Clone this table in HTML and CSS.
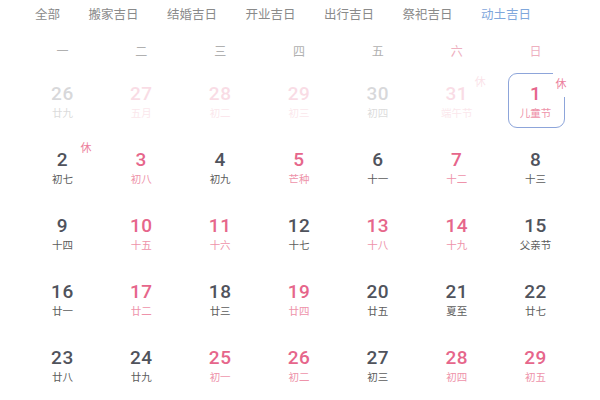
FILE: index.html
```html
<!DOCTYPE html>
<html lang="zh">
<head>
<meta charset="utf-8">
<link rel="stylesheet" href="styles.css">
</head>
<body>
<div class="page">
  <nav class="tabs">
    <span class="tab">全部</span>
    <span class="tab">搬家吉日</span>
    <span class="tab">结婚吉日</span>
    <span class="tab">开业吉日</span>
    <span class="tab">出行吉日</span>
    <span class="tab">祭祀吉日</span>
    <span class="tab active">动土吉日</span>
  </nav>
  <div class="weekdays">
    <span>一</span><span>二</span><span>三</span><span>四</span><span>五</span><span class="wk">六</span><span class="wk">日</span>
  </div>
  <div class="grid">
    <div class="cell other"><b>26</b><i>廿九</i></div>
    <div class="cell other pink"><b>27</b><i>五月</i></div>
    <div class="cell other pink"><b>28</b><i>初二</i></div>
    <div class="cell other pink"><b>29</b><i>初三</i></div>
    <div class="cell other"><b>30</b><i>初四</i></div>
    <div class="cell other pink"><b>31</b><i>端午节</i><em class="tag">休</em></div>
    <div class="cell pink today"><b>1</b><i>儿童节</i><em class="tag">休</em></div>

    <div class="cell"><b>2</b><i>初七</i><em class="tag">休</em></div>
    <div class="cell pink"><b>3</b><i>初八</i></div>
    <div class="cell"><b>4</b><i>初九</i></div>
    <div class="cell pink"><b>5</b><i>芒种</i></div>
    <div class="cell"><b>6</b><i>十一</i></div>
    <div class="cell pink"><b>7</b><i>十二</i></div>
    <div class="cell"><b>8</b><i>十三</i></div>

    <div class="cell"><b>9</b><i>十四</i></div>
    <div class="cell pink"><b>10</b><i>十五</i></div>
    <div class="cell pink"><b>11</b><i>十六</i></div>
    <div class="cell"><b>12</b><i>十七</i></div>
    <div class="cell pink"><b>13</b><i>十八</i></div>
    <div class="cell pink"><b>14</b><i>十九</i></div>
    <div class="cell"><b>15</b><i>父亲节</i></div>

    <div class="cell"><b>16</b><i>廿一</i></div>
    <div class="cell pink"><b>17</b><i>廿二</i></div>
    <div class="cell"><b>18</b><i>廿三</i></div>
    <div class="cell pink"><b>19</b><i>廿四</i></div>
    <div class="cell"><b>20</b><i>廿五</i></div>
    <div class="cell"><b>21</b><i>夏至</i></div>
    <div class="cell"><b>22</b><i>廿七</i></div>

    <div class="cell"><b>23</b><i>廿八</i></div>
    <div class="cell"><b>24</b><i>廿九</i></div>
    <div class="cell pink"><b>25</b><i>初一</i></div>
    <div class="cell pink"><b>26</b><i>初二</i></div>
    <div class="cell"><b>27</b><i>初三</i></div>
    <div class="cell pink"><b>28</b><i>初四</i></div>
    <div class="cell pink"><b>29</b><i>初五</i></div>
  </div>
</div>
</body>
</html>
```
FILE: styles.css
```css
html, body {
  margin: 0;
  padding: 0;
  background: #fff;
}
body {
  font-family: "Noto Sans CJK SC", "Noto Sans", sans-serif;
  width: 600px;
  height: 400px;
  overflow: hidden;
}
.page {
  padding: 0 25px 0 23px;
}
.tabs {
  display: flex;
  gap: 28.5px;
  height: 27px;
  align-items: center;
  padding-left: 12px;
  font-size: 12.5px;
  color: #8a8a8a;
  white-space: nowrap;
}
.tab.active {
  color: #7fa7dc;
}
.weekdays {
  display: grid;
  grid-template-columns: repeat(7, 1fr);
  height: 20px;
  margin-top: 13px;
  align-items: center;
  text-align: center;
  font-size: 12px;
  color: #b0b0b0;
}
.weekdays .wk {
  color: #eeb0bf;
}
.grid {
  display: grid;
  grid-template-columns: repeat(7, 1fr);
  grid-auto-rows: 66px;
  margin-top: 8px;
}
.cell {
  position: relative;
  display: flex;
  flex-direction: column;
  align-items: center;
  padding-top: 16px;
  box-sizing: border-box;
}
.cell b {
  font-family: "Roboto", "DejaVu Sans", sans-serif;
  font-weight: 500;
  font-size: 19px;
  line-height: 20px;
  letter-spacing: 0.5px;
  color: #50535c;
}
.cell i {
  font-style: normal;
  font-size: 10.5px;
  line-height: 14px;
  margin-top: 2px;
  color: #5c5c5c;
}
.cell.pink b {
  color: #e6668b;
}
.cell.pink i {
  color: #ee93aa;
}
.cell.other {
  opacity: 0.22;
}
.tag {
  position: absolute;
  left: calc(50% + 18px);
  top: 6px;
  font-style: normal;
  font-size: 11px;
  line-height: 14px;
  color: #ec7f9c;
}
.cell.today .tag {
  left: calc(50% + 17px);
  top: 5px;
  padding: 3px 3px 7px 3px;
  background: #fff;
}
.cell.today::before {
  content: "";
  position: absolute;
  left: 50%;
  top: 5px;
  width: 55px;
  height: 53px;
  margin-left: -28px;
  border: 1.5px solid #8da5da;
  border-radius: 9px;
}
```
